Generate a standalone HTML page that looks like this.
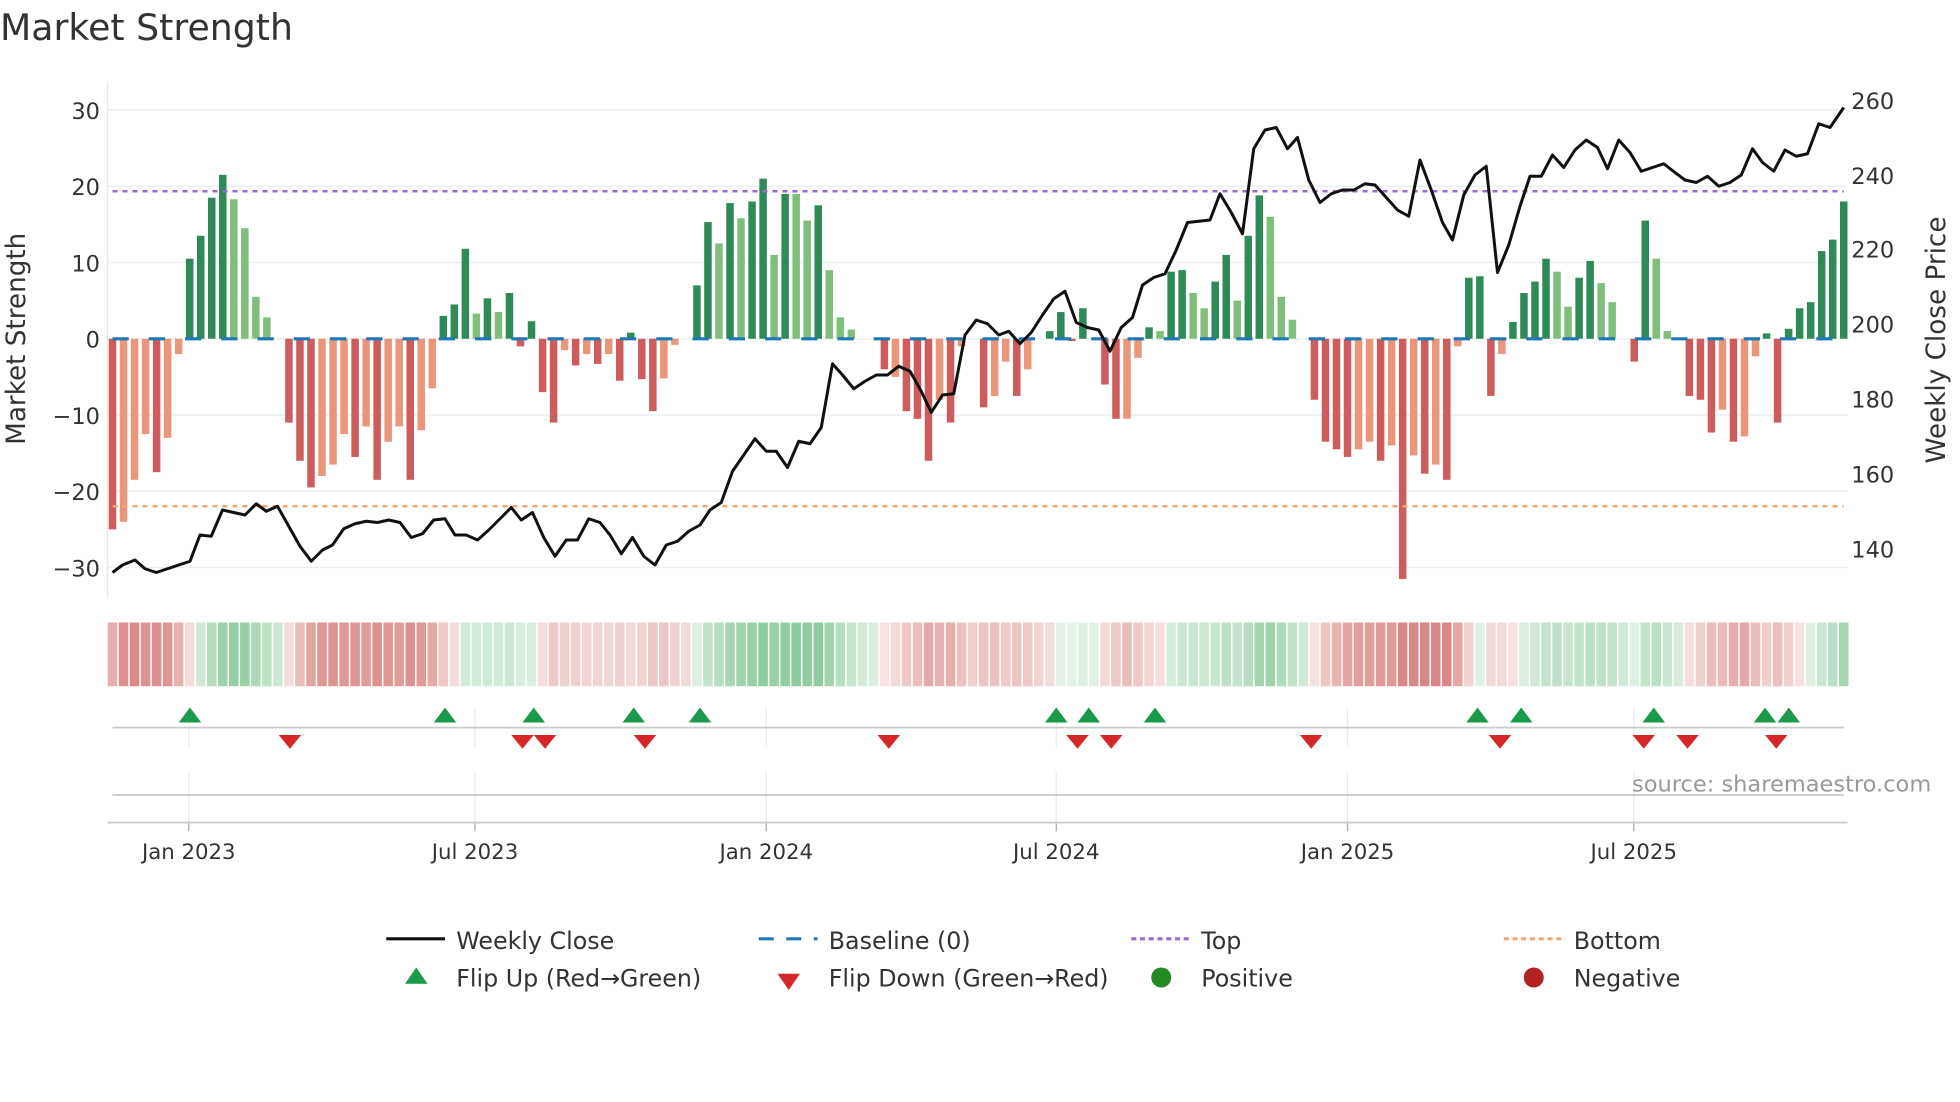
<!DOCTYPE html>
<html><head><meta charset="utf-8"><style>
html,body{margin:0;padding:0;background:#fff;width:1960px;height:1102px;overflow:hidden}
svg{display:block}
text{font-family:"DejaVu Sans","Liberation Sans",sans-serif;fill:#333}
</style></head><body>
<svg id="s" width="1960" height="1102" viewBox="0 0 1568 881.6" xmlns="http://www.w3.org/2000/svg">
<text x="0" y="32" font-size="29">Market Strength</text>
<g id="g"></g>
<text x="1545" y="633" font-size="18" text-anchor="end" fill="#999" style="fill:#999">source: sharemaestro.com</text>
<text transform="translate(20,271) rotate(-90)" font-size="21" text-anchor="middle">Market Strength</text>
<text transform="translate(1556,272) rotate(-90)" font-size="21" text-anchor="middle">Weekly Close Price</text>
<g font-size="18">
<text x="80" y="95" text-anchor="end">30</text><text x="80" y="156" text-anchor="end">20</text>
<text x="80" y="217" text-anchor="end">10</text><text x="80" y="278" text-anchor="end">0</text>
<text x="80" y="339" text-anchor="end">−10</text><text x="80" y="400" text-anchor="end">−20</text>
<text x="80" y="461" text-anchor="end">−30</text>
<text x="1481" y="87">260</text><text x="1481" y="147">240</text><text x="1481" y="206">220</text>
<text x="1481" y="266">200</text><text x="1481" y="326">180</text><text x="1481" y="386">160</text><text x="1481" y="446">140</text>
</g>
<g font-size="17" text-anchor="middle">
<text x="151" y="687">Jan 2023</text><text x="380" y="687">Jul 2023</text><text x="613" y="687">Jan 2024</text>
<text x="845" y="687">Jul 2024</text><text x="1078" y="687">Jan 2025</text><text x="1307" y="687">Jul 2025</text>
</g>
<g font-size="19">
<line x1="309" y1="751" x2="356" y2="751" stroke="#111" stroke-width="2.5"/><text x="365" y="759">Weekly Close</text>
<line x1="607" y1="751" x2="654" y2="751" stroke="#1f77b4" stroke-width="2.5" stroke-dasharray="12,10"/><text x="663" y="759">Baseline (0)</text>
<line x1="905" y1="751" x2="952" y2="751" stroke="#9b6bd0" stroke-width="2.5" stroke-dasharray="4,3"/><text x="961" y="759">Top</text>
<line x1="1203" y1="751" x2="1250" y2="751" stroke="#f0a870" stroke-width="2.5" stroke-dasharray="4,3"/><text x="1259" y="759">Bottom</text>
<polygon points="333,774 342,787 324,787" fill="#1a9a4a"/><text x="365" y="789">Flip Up (Red→Green)</text>
<polygon points="622,779 640,779 631,792" fill="#d62728"/><text x="663" y="789">Flip Down (Green→Red)</text>
<circle cx="929" cy="782" r="8" fill="#228b22"/><text x="961" y="789">Positive</text>
<circle cx="1227" cy="782" r="8" fill="#b22222"/><text x="1259" y="789">Negative</text>
</g>
</svg>
<script>
var V=[[-25,1],[-24,0],[-18.5,0],[-12.5,0],[-17.5,1],[-13,0],[-2,0],[10.5,1],[13.5,1],[18.5,1],[21.5,1],[18.3,0],[14.5,0],[5.5,0],[2.8,0],[0,0],
[-11,1],[-16,1],[-19.5,1],[-18,0],[-16.5,0],[-12.5,0],[-15.5,1],[-11.5,0],[-18.5,1],[-13.5,0],[-11.5,0],[-18.5,1],[-12,0],[-6.5,0],
[3,1],[4.5,1],[11.8,1],[3.3,0],[5.3,1],[3.5,0],[6,1],[-1,1],[2.3,1],[-7,1],[-11,1],[-1.5,0],[-3.5,1],[-2,0],[-3.3,1],[-2,0],[-5.5,1],[0.8,1],[-5.3,1],[-9.5,1],[-5.2,0],[-0.8,0],[0,0],
[7,1],[15.3,1],[12.5,0],[17.8,1],[15.8,0],[18,1],[21,1],[11,0],[19,1],[19,0],[15.5,0],[17.5,1],[9,0],[2.8,0],[1.2,0],[0,0],[0,0],
[-4,1],[-5,0],[-9.5,1],[-10.5,1],[-16,1],[-8,0],[-11,1],[-1,0],[0,0],[-9,1],[-7.5,0],[-3,0],[-7.5,1],[-4,0],[0,0],[1,1],[3.5,1],[-0.3,1],[4,1],[0,0],
[-6,1],[-10.5,1],[-10.5,0],[-2.5,0],[1.5,1],[1,0],[8.8,1],[9,1],[6,0],[4,0],[7.5,1],[11,1],[5,0],[13.5,1],[18.8,1],[16,0],[5.5,0],[2.5,0],[0,0],
[-8,1],[-13.5,1],[-14.5,1],[-15.5,1],[-14.5,0],[-13.5,0],[-16,1],[-14,0],[-31.5,1],[-15.3,0],[-17.7,1],[-16.5,0],[-18.5,1],[-1,0],[8,1],[8.2,1],[-7.5,1],[-2,0],
[2.2,1],[6,1],[7.5,1],[10.5,1],[8.8,0],[4.2,0],[8,1],[10.2,1],[7.3,0],[4.8,0],[0,0],[-3,1],[15.5,1],[10.5,0],[1,0],[0,0],
[-7.5,1],[-8,1],[-12.3,1],[-9.3,0],[-13.5,1],[-12.8,0],[-2.3,0],[0.7,1],[-11,1],[1.3,1],[4,1],[4.8,1],[11.5,1],[13,1],[18,1]];
var P=[[90,458],[98,452],[108,448],[116,455],[125,458],[134,455],[143,452],[152,449],[160,428],[169,429],[178,408],[187,410],[196,412],[205,403],[213,409],[222,405],[231,421],[240,437],[249,449],[258,440],[266,436],[275,423],[284,419],[293,417],[302,418],[311,416],[320,418],[329,430],[338,427],[347,416],[356,415],[364,428],[373,428],[382,432],[391,424],[400,415],[409,406],[417,416],[426,410],[435,430],[444,445],[453,432],[462,432],[471,415],[480,418],[488,428],[497,443],[506,430],[515,445],[524,452],[533,436],[542,433],[551,425],[560,420],[568,408],[577,402],[586,377],[595,364],[604,351],[613,361],[621,361],[630,374],[639,353],[648,355],[657,342],[666,291],[674,300],[683,311],[692,305],[701,300],[710,300],[719,293],[728,297],[737,313],[745,330],[754,316],[763,315],[772,268],[781,256],[790,259],[799,268],[807,265],[816,275],[825,266],[834,252],[843,239],[852,233],[861,258],[870,262],[879,264],[888,281],[897,262],[906,254],[914,228],[923,222],[932,219],[941,200],[950,178],[959,177],[968,176],[976,155],[985,170],[994,187],[1003,119],[1012,104],[1021,102],[1030,119],[1038,110],[1047,144],[1056,162],[1065,155],[1074,152],[1083,152],[1092,147],[1100,148],[1109,158],[1118,168],[1127,173],[1136,128],[1145,152],[1154,178],[1162,192],[1171,156],[1180,140],[1189,133],[1198,218],[1207,196],[1216,165],[1224,141],[1233,141],[1242,124],[1251,134],[1260,120],[1269,112],[1278,118],[1286,135],[1295,112],[1304,122],[1313,137],[1322,134],[1331,131],[1340,138],[1348,144],[1357,146],[1366,141],[1375,149],[1384,146],[1393,140],[1402,119],[1410,130],[1419,137],[1428,120],[1437,125],[1446,123],[1455,99],[1464,102],[1475,86]];
var h='';
[88,149,210,271,332,393,454].forEach(function(y){h+='<line x1="86" x2="1478" y1="'+y+'" y2="'+y+'" stroke="#eceff3" stroke-width="1.2"/>';});
h+='<line x1="86" x2="86" y1="65" y2="478" stroke="#e6e9ee" stroke-width="1.2"/>';
[151,380,613,845,1078,1307].forEach(function(x){h+='<line x1="'+x+'" x2="'+x+'" y1="566" y2="598" stroke="#e8ebf0"/><line x1="'+x+'" x2="'+x+'" y1="617" y2="658" stroke="#e8ebf0"/><line x1="'+x+'" x2="'+x+'" y1="658" y2="665" stroke="#aaa"/>';});
h+='<line x1="90" x2="1475" y1="582" y2="582" stroke="#ccc" stroke-width="1.5"/><line x1="90" x2="1475" y1="636" y2="636" stroke="#ccc" stroke-width="1.5"/><line x1="86" x2="1478" y1="658" y2="658" stroke="#ccc" stroke-width="1.5"/>';
var n=V.length,st=(1475-90)/(n-1),bw=6;
var sm=0;
for(var i=0;i<n;i++){var x=90+i*st,v=V[i][0],d=V[i][1];
 var y0=271,y1=271-v*6.1;
 var c=v>=0?(d?'#2e8b57':'#7fbf7b'):(d?'#cd5c5c':'#e9967a');
 if(Math.abs(v)>0.05)h+='<rect x="'+(x-bw/2)+'" y="'+Math.min(y0,y1)+'" width="'+bw+'" height="'+Math.abs(y1-y0)+'" fill="'+c+'"/>';
 sm=sm*0.6+v*0.4;
 var a=Math.min(0.8,0.18+Math.abs(sm)/28);
 var hc=sm>=0?'rgba(76,175,100,'+(a*0.8)+')':'rgba(200,80,75,'+(a*0.85)+')';
 h+='<rect x="'+(x-st/2+0.6)+'" y="498" width="'+(st-1.2)+'" height="51" fill="'+hc+'"/>';
}
h+='<line x1="90" x2="1475" y1="271" y2="271" stroke="#1f77b4" stroke-width="2.5" stroke-dasharray="13,16"/>';
h+='<line x1="90" x2="1475" y1="153" y2="153" stroke="#9b6bd0" stroke-width="2" stroke-dasharray="4,4"/>';
h+='<line x1="90" x2="1475" y1="405" y2="405" stroke="#f0a870" stroke-width="2" stroke-dasharray="4,4"/>';
h+='<polyline fill="none" stroke="#111" stroke-width="2.4" stroke-linejoin="round" points="'+P.map(function(p){return p.join(',')}).join(' ')+'"/>';
[152,356,427,507,560,845,871,924,1182,1217,1323,1412,1431].forEach(function(x){h+='<polygon points="'+x+',566 '+(x+9)+',578 '+(x-9)+',578" fill="#1a9a4a"/>';});
[232,418,436,516,711,862,889,1049,1200,1315,1350,1421].forEach(function(x){h+='<polygon points="'+(x-9)+',588 '+(x+9)+',588 '+x+',599" fill="#d62728"/>';});
document.getElementById('g').innerHTML=h;
</script>
</body></html>
